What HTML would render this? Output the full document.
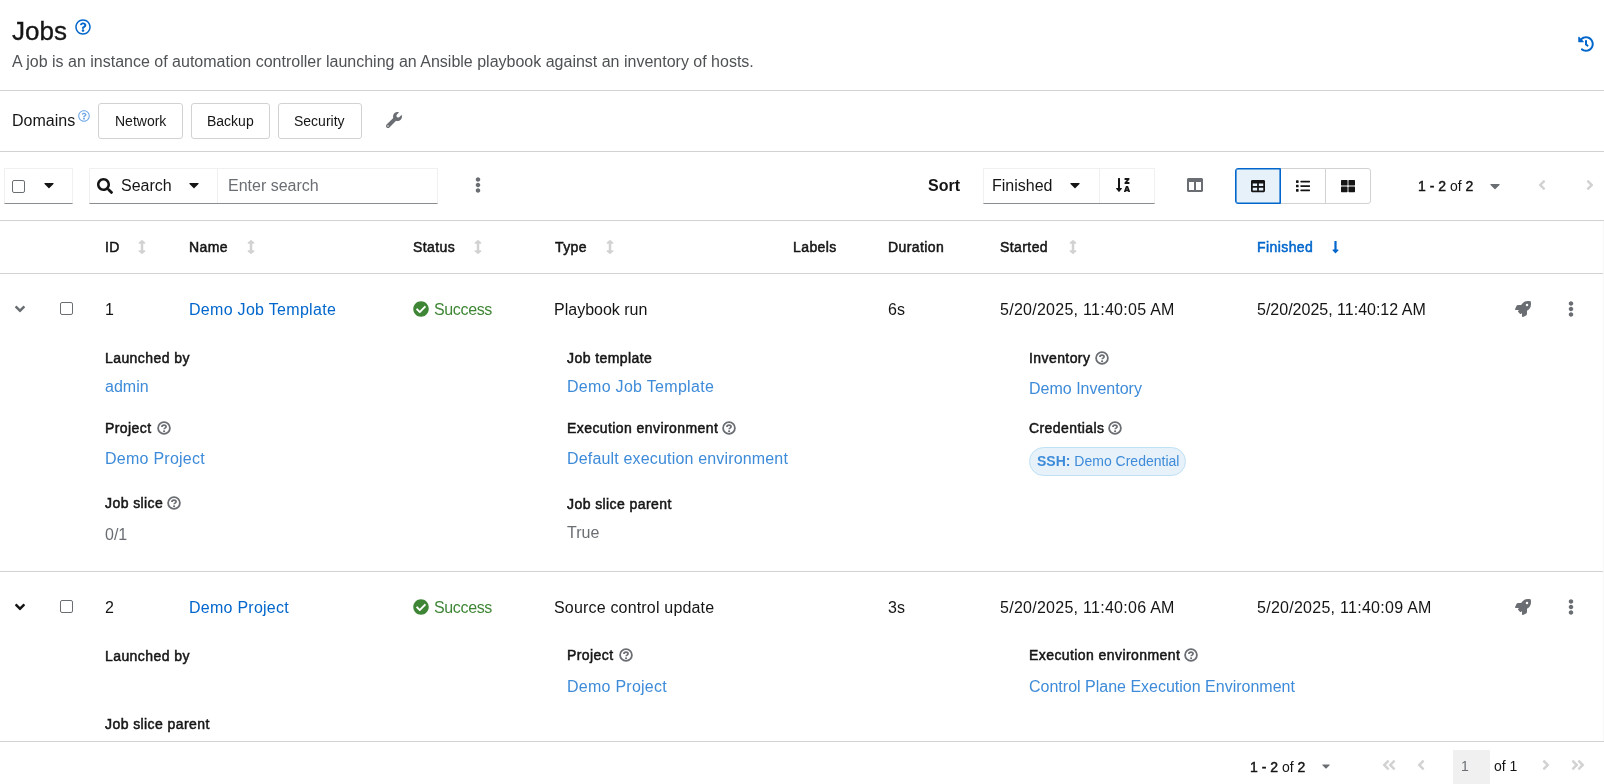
<!DOCTYPE html>
<html><head><meta charset="utf-8">
<style>
html,body{margin:0;padding:0;background:#fff;}
body{width:1604px;height:784px;overflow:hidden;position:relative;font-family:"Liberation Sans",sans-serif;color:#151515;}
.a{position:absolute;}
.t{position:absolute;white-space:nowrap;line-height:1;}
.s14{font-size:14px;}
.s16{font-size:16px;}
.b{font-weight:bold;}
.sb{-webkit-text-stroke:0.5px currentColor;letter-spacing:0.42px;}
.semi{-webkit-text-stroke:0.45px currentColor;}
.lnk{color:#0066cc;}
.lk2{color:#3d8bd9;}
.gray{color:#6a6e73;}
.hl{position:absolute;left:0;width:1604px;height:1px;background:#d2d2d2;}
svg{position:absolute;display:block;}
.t svg.hq{position:relative;display:inline-block;vertical-align:top;margin-left:3px;top:0px;}
.btn{position:absolute;border:1px solid #d2d2d2;border-radius:3px;box-sizing:border-box;background:#fff;}
</style></head>
<body><div id="wrap" style="position:absolute;left:0;top:0;width:1604px;height:784px;will-change:transform;">

<!-- ===== Header ===== -->
<div class="t" style="left:12px;top:18px;font-size:26px;-webkit-text-stroke:0.35px #151515;">Jobs</div>
<svg style="left:75px;top:19px" width="16" height="16" viewBox="0 0 512 512"><path fill="#0066cc" d="M256 8C119.043 8 8 119.083 8 256c0 136.997 111.043 248 248 248s248-111.003 248-248C504 119.083 392.957 8 256 8zm0 448c-110.532 0-200-89.431-200-200 0-110.495 89.472-200 200-200 110.491 0 200 89.471 200 200 0 110.53-89.431 200-200 200zm107.244-255.2c0 67.052-72.421 68.084-72.421 92.863V300c0 6.627-5.373 12-12 12h-45.647c-6.627 0-12-5.373-12-12v-8.659c0-35.745 27.1-50.034 47.579-61.516 17.561-9.845 28.324-16.541 28.324-29.579 0-17.246-21.999-28.693-39.784-28.693-23.189 0-33.894 10.977-48.942 29.969-4.057 5.12-11.46 6.071-16.666 2.124l-27.824-21.098c-5.107-3.872-6.251-11.066-2.644-16.363C184.846 131.491 214.94 112 261.794 112c49.071 0 101.45 38.304 101.45 88.8zM298 368c0 23.159-18.841 42-42 42s-42-18.841-42-42 18.841-42 42-42 42 18.841 42 42z"/></svg>
<div class="t s16" style="left:12px;top:54px;color:#4f5255;">A job is an instance of automation controller launching an Ansible playbook against an inventory of hosts.</div>
<svg style="left:1578px;top:36px" width="16" height="16" viewBox="0 0 512 512"><path fill="#0066cc" d="M504 255.531c.253 136.64-111.18 248.372-247.82 248.468-59.015.042-113.223-20.53-155.822-54.911-11.077-8.94-11.905-25.541-1.839-35.607l11.267-11.267c8.609-8.609 22.353-9.551 31.891-1.984C173.062 425.135 212.781 440 256 440c101.705 0 184-82.311 184-184 0-101.705-82.311-184-184-184-48.814 0-93.149 18.969-126.068 49.932l50.754 50.754c10.08 10.08 2.941 27.314-11.313 27.314H24c-8.837 0-16-7.163-16-16V38.627c0-14.254 17.234-21.393 27.314-11.314l49.372 49.372C129.209 34.136 189.552 8 256 8c136.81 0 247.747 110.78 248 247.531zm-180.912 78.784l9.823-12.63c8.138-10.463 6.253-25.542-4.21-33.679L288 256.349V152c0-13.255-10.745-24-24-24h-16c-13.255 0-24 10.745-24 24v135.651l65.409 50.874c10.463 8.137 25.541 6.253 33.679-4.21z"/></svg>
<div class="hl" style="top:90px"></div>

<!-- ===== Domains ===== -->
<div class="t s16" style="left:12px;top:113px;">Domains</div>
<svg style="left:78px;top:110px" width="12" height="12" viewBox="0 0 512 512"><path fill="#73a9e6" d="M256 8C119.043 8 8 119.083 8 256c0 136.997 111.043 248 248 248s248-111.003 248-248C504 119.083 392.957 8 256 8zm0 448c-110.532 0-200-89.431-200-200 0-110.495 89.472-200 200-200 110.491 0 200 89.471 200 200 0 110.53-89.431 200-200 200zm107.244-255.2c0 67.052-72.421 68.084-72.421 92.863V300c0 6.627-5.373 12-12 12h-45.647c-6.627 0-12-5.373-12-12v-8.659c0-35.745 27.1-50.034 47.579-61.516 17.561-9.845 28.324-16.541 28.324-29.579 0-17.246-21.999-28.693-39.784-28.693-23.189 0-33.894 10.977-48.942 29.969-4.057 5.12-11.46 6.071-16.666 2.124l-27.824-21.098c-5.107-3.872-6.251-11.066-2.644-16.363C184.846 131.491 214.94 112 261.794 112c49.071 0 101.45 38.304 101.45 88.8zM298 368c0 23.159-18.841 42-42 42s-42-18.841-42-42 18.841-42 42-42 42 18.841 42 42z"/></svg>
<div class="btn" style="left:98px;top:103px;width:85px;height:36px;"></div>
<div class="t s14" style="left:115px;top:114px;">Network</div>
<div class="btn" style="left:191px;top:103px;width:79px;height:36px;"></div>
<div class="t s14" style="left:207px;top:114px;">Backup</div>
<div class="btn" style="left:278px;top:103px;width:84px;height:36px;"></div>
<div class="t s14" style="left:294px;top:114px;">Security</div>
<svg style="left:386px;top:112px" width="16" height="16" viewBox="0 0 512 512"><path fill="#6a6e73" d="M507.73 109.1c-2.24-9.030-13.54-12.090-20.12-5.51l-74.36 74.36-67.880-11.310-11.310-67.880 74.36-74.36c6.620-6.620 3.430-17.900-5.660-20.160-47.380-11.740-99.550.910-136.580 37.930-39.640 39.640-50.550 97.100-34.050 147.200L18.740 402.760c-24.990 24.990-24.990 65.510 0 90.500 24.990 24.990 65.510 24.990 90.500 0l213.210-213.210c50.120 16.710 107.470 5.680 147.370-34.220 37.070-37.070 49.700-89.320 37.910-136.730zM64 472c-13.250 0-24-10.750-24-24 0-13.260 10.750-24 24-24s24 10.740 24 24c0 13.250-10.750 24-24 24z"/></svg>
<div class="hl" style="top:151px"></div>

<!-- ===== Toolbar ===== -->
<div class="a" style="left:4px;top:168px;width:69px;height:36px;box-sizing:border-box;border:1px solid #f0f0f0;border-bottom:1px solid #8a8d90;"></div>
<div class="a" style="left:12px;top:180px;width:13px;height:13px;box-sizing:border-box;border:1px solid #6a6e73;border-radius:2px;"></div>
<svg style="left:44px;top:177px" width="10" height="16" viewBox="0 0 320 512"><path fill="#151515" d="M31.3 192h257.3c17.8 0 26.7 21.5 14.1 34.1L174.1 354.8c-7.8 7.8-20.5 7.8-28.3 0L17.2 226.1C4.6 213.5 13.5 192 31.3 192z"/></svg>

<div class="a" style="left:89px;top:168px;width:349px;height:36px;box-sizing:border-box;border:1px solid #f0f0f0;border-bottom:1px solid #8a8d90;"></div>
<div class="a" style="left:217px;top:169px;width:1px;height:34px;background:#f0f0f0;"></div>
<svg style="left:97px;top:178px" width="16" height="16" viewBox="0 0 512 512"><path fill="#151515" d="M505 442.7L405.3 343c-4.500-4.500-10.600-7-17-7H372c27.600-35.300 44-79.700 44-128C416 93.100 322.900 0 208 0S0 93.100 0 208s93.100 208 208 208c48.300 0 92.700-16.400 128-44v16.300c0 6.400 2.500 12.500 7 17l99.700 99.700c9.400 9.400 24.600 9.400 33.900 0l28.300-28.300c9.400-9.400 9.400-24.600.1-34zM208 336c-70.700 0-128-57.200-128-128 0-70.700 57.200-128 128-128 70.700 0 128 57.200 128 128 0 70.700-57.200 128-128 128z"/></svg>
<div class="t s16" style="left:121px;top:178px;">Search</div>
<svg style="left:189px;top:177px" width="10" height="16" viewBox="0 0 320 512"><path fill="#151515" d="M31.3 192h257.3c17.8 0 26.7 21.5 14.1 34.1L174.1 354.8c-7.8 7.8-20.5 7.8-28.3 0L17.2 226.1C4.6 213.5 13.5 192 31.3 192z"/></svg>
<div class="t s16" style="left:228px;top:178px;color:#6a6e73;">Enter search</div>
<svg style="left:474px;top:177px" width="8" height="16" viewBox="0 0 192 512"><path fill="#6a6e73" d="M96 184c39.8 0 72 32.2 72 72s-32.2 72-72 72-72-32.2-72-72 32.2-72 72-72zM24 80c0 39.8 32.2 72 72 72s72-32.2 72-72S135.8 8 96 8 24 40.2 24 80zm0 352c0 39.8 32.2 72 72 72s72-32.2 72-72-32.2-72-72-72-72 32.2-72 72z"/></svg>

<div class="t s16 b" style="left:928px;top:178px;">Sort</div>
<div class="a" style="left:983px;top:168px;width:172px;height:36px;box-sizing:border-box;border:1px solid #f0f0f0;border-bottom:1px solid #8a8d90;"></div>
<div class="a" style="left:1099px;top:169px;width:1px;height:34px;background:#f0f0f0;"></div>
<div class="t s16" style="left:992px;top:178px;">Finished</div>
<svg style="left:1070px;top:177px" width="10" height="16" viewBox="0 0 320 512"><path fill="#151515" d="M31.3 192h257.3c17.8 0 26.7 21.5 14.1 34.1L174.1 354.8c-7.8 7.8-20.5 7.8-28.3 0L17.2 226.1C4.6 213.5 13.5 192 31.3 192z"/></svg>
<svg style="left:1116px;top:177px" width="14" height="16" viewBox="0 0 448 512"><path fill="#151515" d="M176 352h-48V48a16 16 0 0 0-16-16H80a16 16 0 0 0-16 16v304H16c-14.19 0-21.36 17.24-11.29 27.31l80 96a16 16 0 0 0 22.62 0l80-96C197.35 369.26 190.22 352 176 352zm112-128h128a16 16 0 0 0 16-16v-32a16 16 0 0 0-16-16h-56l61.26-70.45A32 32 0 0 0 432 65.63V48a16 16 0 0 0-16-16H288a16 16 0 0 0-16 16v32a16 16 0 0 0 16 16h56l-61.26 70.45A32 32 0 0 0 272 190.37V208a16 16 0 0 0 16 16zm159.06 234.62l-59.27-160A16 16 0 0 0 372.72 288h-41.440a16 16 0 0 0-15.070 10.620l-59.270 160A16 16 0 0 0 272 480h24.830a16 16 0 0 0 15.230-11.080l4.420-12.920h71l4.410 12.920A16 16 0 0 0 407.160 480H432a16 16 0 0 0 15.060-21.380zM335.610 400L352 352l16.390 48z"/></svg>
<svg style="left:1187px;top:177px" width="16" height="16" viewBox="0 0 512 512"><path fill="#6a6e73" d="M464 32H48C21.49 32 0 53.49 0 80v352c0 26.51 21.49 48 48 48h416c26.51 0 48-21.49 48-48V80c0-26.51-21.49-48-48-48zM224 416H64V160h160v256zm224 0H288V160h160v256z"/></svg>

<div class="a" style="left:1235px;top:168px;width:136px;height:36px;box-sizing:border-box;border:1px solid #d2d2d2;border-radius:3px;"></div>
<div class="a" style="left:1325px;top:169px;width:1px;height:34px;background:#d2d2d2;"></div>
<div class="a" style="left:1235px;top:168px;width:46px;height:36px;box-sizing:border-box;border:1px solid #0066cc;box-shadow:inset 0 0 0 0.6px #0066cc;border-radius:3px 0 0 3px;background:#e7f1fa;"></div>
<svg style="left:1251px;top:178px" width="14" height="16" viewBox="0 0 512 512"><path fill="#151515" d="M464 32H48C21.49 32 0 53.49 0 80v352c0 26.51 21.49 48 48 48h416c26.51 0 48-21.49 48-48V80c0-26.51-21.49-48-48-48zM224 416H64v-96h160v96zm0-160H64v-96h160v96zm224 160H288v-96h160v96zm0-160H288v-96h160v96z"/></svg>
<svg style="left:1296px;top:178px" width="14" height="16" viewBox="0 0 512 512"><path fill="#151515" d="M80 368H16a16 16 0 0 0-16 16v64a16 16 0 0 0 16 16h64a16 16 0 0 0 16-16v-64a16 16 0 0 0-16-16zm0-320H16A16 16 0 0 0 0 64v64a16 16 0 0 0 16 16h64a16 16 0 0 0 16-16V64a16 16 0 0 0-16-16zm0 160H16a16 16 0 0 0-16 16v64a16 16 0 0 0 16 16h64a16 16 0 0 0 16-16v-64a16 16 0 0 0-16-16zm416 176H176a16 16 0 0 0-16 16v32a16 16 0 0 0 16 16h320a16 16 0 0 0 16-16v-32a16 16 0 0 0-16-16zm0-320H176a16 16 0 0 0-16 16v32a16 16 0 0 0 16 16h320a16 16 0 0 0 16-16V80a16 16 0 0 0-16-16zm0 160H176a16 16 0 0 0-16 16v32a16 16 0 0 0 16 16h320a16 16 0 0 0 16-16v-32a16 16 0 0 0-16-16z"/></svg>
<svg style="left:1341px;top:178px" width="14" height="16" viewBox="0 0 512 512"><path fill="#151515" d="M296 32h192c13.255 0 24 10.745 24 24v160c0 13.255-10.745 24-24 24H296c-13.255 0-24-10.745-24-24V56c0-13.255 10.745-24 24-24zm-80 0H24C10.745 32 0 42.745 0 56v160c0 13.255 10.745 24 24 24h192c13.255 0 24-10.745 24-24V56c0-13.255-10.745-24-24-24zM0 296v160c0 13.255 10.745 24 24 24h192c13.255 0 24-10.745 24-24V296c0-13.255-10.745-24-24-24H24c-13.255 0-24 10.745-24 24zm296 184h192c13.255 0 24-10.745 24-24V296c0-13.255-10.745-24-24-24H296c-13.255 0-24 10.745-24 24v160c0 13.255 10.745 24 24 24z"/></svg>

<div class="t s14" style="left:1418px;top:179px;"><span class="semi">1 - 2</span> of <span class="semi">2</span></div>
<svg style="left:1490px;top:178px" width="10" height="16" viewBox="0 0 320 512"><path fill="#6a6e73" d="M31.3 192h257.3c17.8 0 26.7 21.5 14.1 34.1L174.1 354.8c-7.8 7.8-20.5 7.8-28.3 0L17.2 226.1C4.6 213.5 13.5 192 31.3 192z"/></svg>
<svg style="left:1538px;top:177px" width="8" height="16" viewBox="0 0 256 512"><path fill="#d2d2d2" d="M31.7 239l136-136c9.4-9.4 24.6-9.4 33.9 0l22.6 22.6c9.4 9.4 9.4 24.6 0 33.9L127.9 256l96.4 96.4c9.4 9.4 9.4 24.6 0 33.9L201.7 409c-9.4 9.4-24.6 9.4-33.9 0l-136-136c-9.5-9.4-9.5-24.6-.1-34z"/></svg>
<svg style="left:1586px;top:177px" width="8" height="16" viewBox="0 0 256 512"><path fill="#d2d2d2" d="M224.3 273l-136 136c-9.4 9.4-24.6 9.4-33.9 0l-22.6-22.6c-9.4-9.4-9.4-24.6 0-33.9l96.4-96.4-96.4-96.4c-9.4-9.4-9.4-24.6 0-33.9L54.3 103c9.4-9.4 24.6-9.4 33.9 0l136 136c9.5 9.4 9.5 24.6.1 34z"/></svg>
<div class="hl" style="top:220px"></div>
<!-- ===== Table header ===== -->
<div class="t s14 sb" style="left:105px;top:240px;">ID</div>
<svg class="srt" style="left:138px;top:240px" width="8" height="14" viewBox="0 0 256 512" preserveAspectRatio="none"><path fill="#d2d2d2" d="M214.059 377.941H168V134.059h46.059c21.382 0 32.09-25.851 16.971-40.971L144.971 7.029c-9.373-9.373-24.568-9.373-33.941 0L24.971 93.088c-15.119 15.119-4.411 40.971 16.971 40.971H88v243.882H41.941c-21.382 0-32.090 25.851-16.971 40.971l86.059 86.059c9.373 9.373 24.568 9.373 33.941 0l86.059-86.059c15.120-15.119 4.412-40.971-16.970-40.971z"/></svg>
<div class="t s14 sb" style="left:189px;top:240px;">Name</div>
<svg style="left:247px;top:240px" width="8" height="14" viewBox="0 0 256 512" preserveAspectRatio="none"><path fill="#d2d2d2" d="M214.059 377.941H168V134.059h46.059c21.382 0 32.09-25.851 16.971-40.971L144.971 7.029c-9.373-9.373-24.568-9.373-33.941 0L24.971 93.088c-15.119 15.119-4.411 40.971 16.971 40.971H88v243.882H41.941c-21.382 0-32.090 25.851-16.971 40.971l86.059 86.059c9.373 9.373 24.568 9.373 33.941 0l86.059-86.059c15.120-15.119 4.412-40.971-16.970-40.971z"/></svg>
<div class="t s14 sb" style="left:413px;top:240px;">Status</div>
<svg style="left:474px;top:240px" width="8" height="14" viewBox="0 0 256 512" preserveAspectRatio="none"><path fill="#d2d2d2" d="M214.059 377.941H168V134.059h46.059c21.382 0 32.09-25.851 16.971-40.971L144.971 7.029c-9.373-9.373-24.568-9.373-33.941 0L24.971 93.088c-15.119 15.119-4.411 40.971 16.971 40.971H88v243.882H41.941c-21.382 0-32.090 25.851-16.971 40.971l86.059 86.059c9.373 9.373 24.568 9.373 33.941 0l86.059-86.059c15.120-15.119 4.412-40.971-16.970-40.971z"/></svg>
<div class="t s14 sb" style="left:555px;top:240px;">Type</div>
<svg style="left:606px;top:240px" width="8" height="14" viewBox="0 0 256 512" preserveAspectRatio="none"><path fill="#d2d2d2" d="M214.059 377.941H168V134.059h46.059c21.382 0 32.09-25.851 16.971-40.971L144.971 7.029c-9.373-9.373-24.568-9.373-33.941 0L24.971 93.088c-15.119 15.119-4.411 40.971 16.971 40.971H88v243.882H41.941c-21.382 0-32.090 25.851-16.971 40.971l86.059 86.059c9.373 9.373 24.568 9.373 33.941 0l86.059-86.059c15.120-15.119 4.412-40.971-16.970-40.971z"/></svg>
<div class="t s14 sb" style="left:793px;top:240px;">Labels</div>
<div class="t s14 sb" style="left:888px;top:240px;">Duration</div>
<div class="t s14 sb" style="left:1000px;top:240px;">Started</div>
<svg style="left:1069px;top:240px" width="8" height="14" viewBox="0 0 256 512" preserveAspectRatio="none"><path fill="#d2d2d2" d="M214.059 377.941H168V134.059h46.059c21.382 0 32.09-25.851 16.971-40.971L144.971 7.029c-9.373-9.373-24.568-9.373-33.941 0L24.971 93.088c-15.119 15.119-4.411 40.971 16.971 40.971H88v243.882H41.941c-21.382 0-32.090 25.851-16.971 40.971l86.059 86.059c9.373 9.373 24.568 9.373 33.941 0l86.059-86.059c15.120-15.119 4.412-40.971-16.970-40.971z"/></svg>
<div class="t s14 sb lnk" style="left:1257px;top:240px;">Finished</div>
<svg style="left:1332px;top:240px" width="7" height="14" viewBox="0 0 256 512" preserveAspectRatio="none"><path fill="#0066cc" d="M168 345.941V44c0-6.627-5.373-12-12-12h-56c-6.627 0-12 5.373-12 12v301.941H41.941c-21.382 0-32.090 25.851-16.971 40.971l86.059 86.059c9.373 9.373 24.569 9.373 33.941 0l86.059-86.059c15.119-15.119 4.411-40.971-16.971-40.971H168z"/></svg>
<div class="hl" style="top:273px;width:1603px"></div>
<div class="a" style="left:1603px;top:221px;width:1px;height:520px;background:#f8f8f8;"></div>

<!-- ===== Row 1 ===== -->
<svg style="left:15px;top:301px" width="10" height="16" viewBox="0 0 320 512"><path fill="#6a6e73" d="M143 352.3L7 216.3c-9.4-9.4-9.4-24.6 0-33.9l22.6-22.6c9.4-9.4 24.6-9.4 33.9 0l96.4 96.4 96.4-96.4c9.4-9.4 24.6-9.4 33.9 0l22.6 22.6c9.4 9.4 9.4 24.6 0 33.9l-136 136c-9.2 9.4-24.4 9.4-33.8 0z"/></svg>
<div class="a" style="left:60px;top:302px;width:13px;height:13px;box-sizing:border-box;border:1px solid #6a6e73;border-radius:2px;"></div>
<div class="t s16" style="left:105px;top:302px;">1</div>
<div class="t s16 lnk" style="left:189px;top:302px;letter-spacing:0.3px;">Demo Job Template</div>
<svg style="left:413px;top:301px" width="16" height="16" viewBox="0 0 512 512"><path fill="#3e8635" d="M504 256c0 136.967-111.033 248-248 248S8 392.967 8 256 119.033 8 256 8s248 111.033 248 248zM227.314 387.314l184-184c6.248-6.248 6.248-16.379 0-22.627l-22.627-22.627c-6.248-6.249-16.379-6.249-22.628 0L216 308.118l-70.059-70.059c-6.248-6.248-16.379-6.248-22.628 0l-22.627 22.627c-6.248 6.248-6.248 16.379 0 22.627l104 104c6.249 6.249 16.379 6.249 22.628.001z"/></svg>
<div class="t s16" style="left:434px;top:302px;color:#3e8635;letter-spacing:-0.35px;">Success</div>
<div class="t s16" style="left:554px;top:302px;">Playbook run</div>
<div class="t s16" style="left:888px;top:302px;">6s</div>
<div class="t s16" style="left:1000px;top:302px;letter-spacing:0.27px;">5/20/2025, 11:40:05 AM</div>
<div class="t s16" style="left:1257px;top:302px;">5/20/2025, 11:40:12 AM</div>
<svg style="left:1515px;top:301px" width="16" height="16" viewBox="0 0 512 512"><path fill="#6a6e73" d="M505.12019,19.09375c-1.18945-5.53125-6.65819-11-12.207-12.1875C460.716,0,435.507,0,410.40747,0,307.17523,0,245.26909,55.20312,199.05238,128H94.83772c-16.34763.01562-35.55658,11.875-42.88664,26.48438L2.51562,253.29688A28.4,28.4,0,0,0,0,264a24.00867,24.00867,0,0,0,24.00582,24H127.81618l-22.47457,22.46875c-11.36521,11.36133-12.99607,32.25781,0,45.25L156.24582,406.625c11.15623,11.1875,32.15619,13.15625,45.27726,0l22.47457-22.46875V488a24.00867,24.00867,0,0,0,24.00581,24,28.55934,28.55934,0,0,0,10.707-2.51562l98.72834-49.39063c14.62888-7.29687,26.50776-26.5,26.50776-42.85937V312.79688c72.59753-46.3125,128.03493-108.40626,128.03493-211.09376C512.07526,76.5,512.07526,51.29688,505.12019,19.09375ZM384.04033,168A40,40,0,1,1,424.05,128,40.02322,40.02322,0,0,1,384.04033,168Z"/></svg>
<svg style="left:1567px;top:301px" width="8" height="16" viewBox="0 0 192 512"><path fill="#6a6e73" d="M96 184c39.8 0 72 32.2 72 72s-32.2 72-72 72-72-32.2-72-72 32.2-72 72-72zM24 80c0 39.8 32.2 72 72 72s72-32.2 72-72S135.8 8 96 8 24 40.2 24 80zm0 352c0 39.8 32.2 72 72 72s72-32.2 72-72-32.2-72-72-72-72 32.2-72 72z"/></svg>

<!-- Row 1 expanded -->
<div class="t s14 sb" style="left:105px;top:351px;">Launched by</div>
<div class="t s16 lk2" style="left:105px;top:379px;">admin</div>
<div class="t s14 sb" style="left:105px;top:421px;">Project</div>
<svg style="left:157px;top:421px" width="14" height="14" viewBox="0 0 14 14"><circle cx="7" cy="7" r="5.9" fill="none" stroke="#6a6e73" stroke-width="1.8"/><path d="M4.9 5.9C4.9 4.7 5.8 4.1 7 4.1C8.2 4.1 9.1 4.8 9.1 5.8C9.1 7.1 7.1 7.1 7.1 8.3" fill="none" stroke="#6a6e73" stroke-width="1.7"/><rect x="6.15" y="9.4" width="1.9" height="1.7" fill="#6a6e73"/></svg>
<div class="t s16 lk2" style="left:105px;top:451px;letter-spacing:0.25px;">Demo Project</div>
<div class="t s14 sb" style="left:105px;top:496px;">Job slice</div>
<svg style="left:167px;top:496px" width="14" height="14" viewBox="0 0 14 14"><circle cx="7" cy="7" r="5.9" fill="none" stroke="#6a6e73" stroke-width="1.8"/><path d="M4.9 5.9C4.9 4.7 5.8 4.1 7 4.1C8.2 4.1 9.1 4.8 9.1 5.8C9.1 7.1 7.1 7.1 7.1 8.3" fill="none" stroke="#6a6e73" stroke-width="1.7"/><rect x="6.15" y="9.4" width="1.9" height="1.7" fill="#6a6e73"/></svg>
<div class="t s16 gray" style="left:105px;top:527px;">0/1</div>

<div class="t s14 sb" style="left:567px;top:351px;">Job template</div>
<div class="t s16 lk2" style="left:567px;top:379px;letter-spacing:0.3px;">Demo Job Template</div>
<div class="t s14 sb" style="left:567px;top:421px;">Execution environment</div>
<svg style="left:722px;top:421px" width="14" height="14" viewBox="0 0 14 14"><circle cx="7" cy="7" r="5.9" fill="none" stroke="#6a6e73" stroke-width="1.8"/><path d="M4.9 5.9C4.9 4.7 5.8 4.1 7 4.1C8.2 4.1 9.1 4.8 9.1 5.8C9.1 7.1 7.1 7.1 7.1 8.3" fill="none" stroke="#6a6e73" stroke-width="1.7"/><rect x="6.15" y="9.4" width="1.9" height="1.7" fill="#6a6e73"/></svg>
<div class="t s16 lk2" style="left:567px;top:451px;letter-spacing:0.17px;">Default execution environment</div>
<div class="t s14 sb" style="left:567px;top:497px;">Job slice parent</div>
<div class="t s16 gray" style="left:567px;top:525px;">True</div>

<div class="t s14 sb" style="left:1029px;top:351px;">Inventory</div>
<svg style="left:1095px;top:351px" width="14" height="14" viewBox="0 0 14 14"><circle cx="7" cy="7" r="5.9" fill="none" stroke="#6a6e73" stroke-width="1.8"/><path d="M4.9 5.9C4.9 4.7 5.8 4.1 7 4.1C8.2 4.1 9.1 4.8 9.1 5.8C9.1 7.1 7.1 7.1 7.1 8.3" fill="none" stroke="#6a6e73" stroke-width="1.7"/><rect x="6.15" y="9.4" width="1.9" height="1.7" fill="#6a6e73"/></svg>
<div class="t s16 lk2" style="left:1029px;top:381px;">Demo Inventory</div>
<div class="t s14 sb" style="left:1029px;top:421px;">Credentials</div>
<svg style="left:1108px;top:421px" width="14" height="14" viewBox="0 0 14 14"><circle cx="7" cy="7" r="5.9" fill="none" stroke="#6a6e73" stroke-width="1.8"/><path d="M4.9 5.9C4.9 4.7 5.8 4.1 7 4.1C8.2 4.1 9.1 4.8 9.1 5.8C9.1 7.1 7.1 7.1 7.1 8.3" fill="none" stroke="#6a6e73" stroke-width="1.7"/><rect x="6.15" y="9.4" width="1.9" height="1.7" fill="#6a6e73"/></svg>
<div class="a" style="left:1029px;top:447px;width:157px;height:29px;box-sizing:border-box;border:1px solid #bee1f4;border-radius:15px;background:#e7f1fa;"></div>
<div class="t s14 lk2" style="left:1037px;top:454px;"><b>SSH:</b> Demo Credential</div>
<div class="hl" style="top:571px;width:1603px"></div>

<!-- ===== Row 2 ===== -->
<svg style="left:15px;top:599px" width="10" height="16" viewBox="0 0 320 512"><path fill="#151515" d="M143 352.3L7 216.3c-9.4-9.4-9.4-24.6 0-33.9l22.6-22.6c9.4-9.4 24.6-9.4 33.9 0l96.4 96.4 96.4-96.4c9.4-9.4 24.6-9.4 33.9 0l22.6 22.6c9.4 9.4 9.4 24.6 0 33.9l-136 136c-9.2 9.4-24.4 9.4-33.8 0z"/></svg>
<div class="a" style="left:60px;top:600px;width:13px;height:13px;box-sizing:border-box;border:1px solid #6a6e73;border-radius:2px;"></div>
<div class="t s16" style="left:105px;top:600px;">2</div>
<div class="t s16 lnk" style="left:189px;top:600px;letter-spacing:0.25px;">Demo Project</div>
<svg style="left:413px;top:599px" width="16" height="16" viewBox="0 0 512 512"><path fill="#3e8635" d="M504 256c0 136.967-111.033 248-248 248S8 392.967 8 256 119.033 8 256 8s248 111.033 248 248zM227.314 387.314l184-184c6.248-6.248 6.248-16.379 0-22.627l-22.627-22.627c-6.248-6.249-16.379-6.249-22.628 0L216 308.118l-70.059-70.059c-6.248-6.248-16.379-6.248-22.628 0l-22.627 22.627c-6.248 6.248-6.248 16.379 0 22.627l104 104c6.249 6.249 16.379 6.249 22.628.001z"/></svg>
<div class="t s16" style="left:434px;top:600px;color:#3e8635;letter-spacing:-0.35px;">Success</div>
<div class="t s16" style="left:554px;top:600px;letter-spacing:0.18px;">Source control update</div>
<div class="t s16" style="left:888px;top:600px;">3s</div>
<div class="t s16" style="left:1000px;top:600px;letter-spacing:0.27px;">5/20/2025, 11:40:06 AM</div>
<div class="t s16" style="left:1257px;top:600px;letter-spacing:0.27px;">5/20/2025, 11:40:09 AM</div>
<svg style="left:1515px;top:599px" width="16" height="16" viewBox="0 0 512 512"><path fill="#6a6e73" d="M505.12019,19.09375c-1.18945-5.53125-6.65819-11-12.207-12.1875C460.716,0,435.507,0,410.40747,0,307.17523,0,245.26909,55.20312,199.05238,128H94.83772c-16.34763.01562-35.55658,11.875-42.88664,26.48438L2.51562,253.29688A28.4,28.4,0,0,0,0,264a24.00867,24.00867,0,0,0,24.00582,24H127.81618l-22.47457,22.46875c-11.36521,11.36133-12.99607,32.25781,0,45.25L156.24582,406.625c11.15623,11.1875,32.15619,13.15625,45.27726,0l22.47457-22.46875V488a24.00867,24.00867,0,0,0,24.00581,24,28.55934,28.55934,0,0,0,10.707-2.51562l98.72834-49.39063c14.62888-7.29687,26.50776-26.5,26.50776-42.85937V312.79688c72.59753-46.3125,128.03493-108.40626,128.03493-211.09376C512.07526,76.5,512.07526,51.29688,505.12019,19.09375ZM384.04033,168A40,40,0,1,1,424.05,128,40.02322,40.02322,0,0,1,384.04033,168Z"/></svg>
<svg style="left:1567px;top:599px" width="8" height="16" viewBox="0 0 192 512"><path fill="#6a6e73" d="M96 184c39.8 0 72 32.2 72 72s-32.2 72-72 72-72-32.2-72-72 32.2-72 72-72zM24 80c0 39.8 32.2 72 72 72s72-32.2 72-72S135.8 8 96 8 24 40.2 24 80zm0 352c0 39.8 32.2 72 72 72s72-32.2 72-72-32.2-72-72-72-72 32.2-72 72z"/></svg>

<!-- Row 2 expanded -->
<div class="t s14 sb" style="left:105px;top:649px;">Launched by</div>
<div class="t s14 sb" style="left:105px;top:717px;">Job slice parent</div>
<div class="t s14 sb" style="left:567px;top:648px;">Project</div>
<svg style="left:619px;top:648px" width="14" height="14" viewBox="0 0 14 14"><circle cx="7" cy="7" r="5.9" fill="none" stroke="#6a6e73" stroke-width="1.8"/><path d="M4.9 5.9C4.9 4.7 5.8 4.1 7 4.1C8.2 4.1 9.1 4.8 9.1 5.8C9.1 7.1 7.1 7.1 7.1 8.3" fill="none" stroke="#6a6e73" stroke-width="1.7"/><rect x="6.15" y="9.4" width="1.9" height="1.7" fill="#6a6e73"/></svg>
<div class="t s16 lk2" style="left:567px;top:679px;letter-spacing:0.25px;">Demo Project</div>
<div class="t s14 sb" style="left:1029px;top:648px;">Execution environment</div>
<svg style="left:1184px;top:648px" width="14" height="14" viewBox="0 0 14 14"><circle cx="7" cy="7" r="5.9" fill="none" stroke="#6a6e73" stroke-width="1.8"/><path d="M4.9 5.9C4.9 4.7 5.8 4.1 7 4.1C8.2 4.1 9.1 4.8 9.1 5.8C9.1 7.1 7.1 7.1 7.1 8.3" fill="none" stroke="#6a6e73" stroke-width="1.7"/><rect x="6.15" y="9.4" width="1.9" height="1.7" fill="#6a6e73"/></svg>
<div class="t s16 lk2" style="left:1029px;top:679px;">Control Plane Execution Environment</div>
<div class="hl" style="top:741px"></div>

<!-- ===== Bottom pagination ===== -->
<div class="t s14" style="left:1250px;top:760px;"><span class="semi">1 - 2</span> of <span class="semi">2</span></div>
<svg style="left:1322px;top:758px" width="8" height="16" viewBox="0 0 320 512"><path fill="#6a6e73" d="M31.3 192h257.3c17.8 0 26.7 21.5 14.1 34.1L174.1 354.8c-7.8 7.8-20.5 7.8-28.3 0L17.2 226.1C4.6 213.5 13.5 192 31.3 192z"/></svg>
<svg style="left:1382px;top:757px" width="14" height="16" viewBox="0 0 448 512" preserveAspectRatio="none"><path fill="#d2d2d2" d="M223.7 239l136-136c9.4-9.4 24.6-9.4 33.9 0l22.6 22.6c9.4 9.4 9.4 24.6 0 33.9L319.9 256l96.4 96.4c9.4 9.4 9.4 24.6 0 33.9L393.7 409c-9.4 9.4-24.6 9.4-33.9 0l-136-136c-9.5-9.4-9.5-24.6-.1-34zm-192 34l136 136c9.4 9.4 24.6 9.4 33.9 0l22.6-22.6c9.4-9.4 9.4-24.6 0-33.9L127.9 256l96.4-96.4c9.4-9.4 9.4-24.6 0-33.9L201.7 103c-9.4-9.4-24.6-9.4-33.9 0l-136 136c-9.5 9.4-9.5 24.6-.1 34z"/></svg>
<svg style="left:1417px;top:757px" width="8" height="16" viewBox="0 0 256 512"><path fill="#d2d2d2" d="M31.7 239l136-136c9.4-9.4 24.6-9.4 33.9 0l22.6 22.6c9.4 9.4 9.4 24.6 0 33.9L127.9 256l96.4 96.4c9.4 9.4 9.4 24.6 0 33.9L201.7 409c-9.4 9.4-24.6 9.4-33.9 0l-136-136c-9.5-9.4-9.5-24.6-.1-34z"/></svg>
<div class="a" style="left:1453px;top:750px;width:37px;height:34px;background:#f0f0f0;"></div>
<div class="t s14" style="left:1461px;top:759px;color:#6a6e73;">1</div>
<div class="t s14" style="left:1494px;top:759px;">of 1</div>
<svg style="left:1542px;top:757px" width="8" height="16" viewBox="0 0 256 512"><path fill="#d2d2d2" d="M224.3 273l-136 136c-9.4 9.4-24.6 9.4-33.9 0l-22.6-22.6c-9.4-9.4-9.4-24.6 0-33.9l96.4-96.4-96.4-96.4c-9.4-9.4-9.4-24.6 0-33.9L54.3 103c9.4-9.4 24.6-9.4 33.9 0l136 136c9.5 9.4 9.5 24.6.1 34z"/></svg>
<svg style="left:1571px;top:757px" width="14" height="16" viewBox="0 0 448 512" preserveAspectRatio="none"><path fill="#d2d2d2" d="M224.3 273l-136 136c-9.4 9.4-24.6 9.4-33.9 0l-22.6-22.6c-9.4-9.4-9.4-24.6 0-33.9l96.4-96.4-96.4-96.4c-9.4-9.4-9.4-24.6 0-33.9L54.3 103c9.4-9.4 24.6-9.4 33.9 0l136 136c9.5 9.4 9.5 24.6.1 34zm192-34l-136-136c-9.4-9.4-24.6-9.4-33.9 0l-22.6 22.6c-9.4 9.4-9.4 24.6 0 33.9l96.4 96.4-96.4 96.4c-9.4 9.4-9.4 24.6 0 33.9l22.6 22.6c9.4 9.4 24.6 9.4 33.9 0l136-136c9.4-9.2 9.4-24.4 0-33.8z"/></svg>
</div></body></html>
